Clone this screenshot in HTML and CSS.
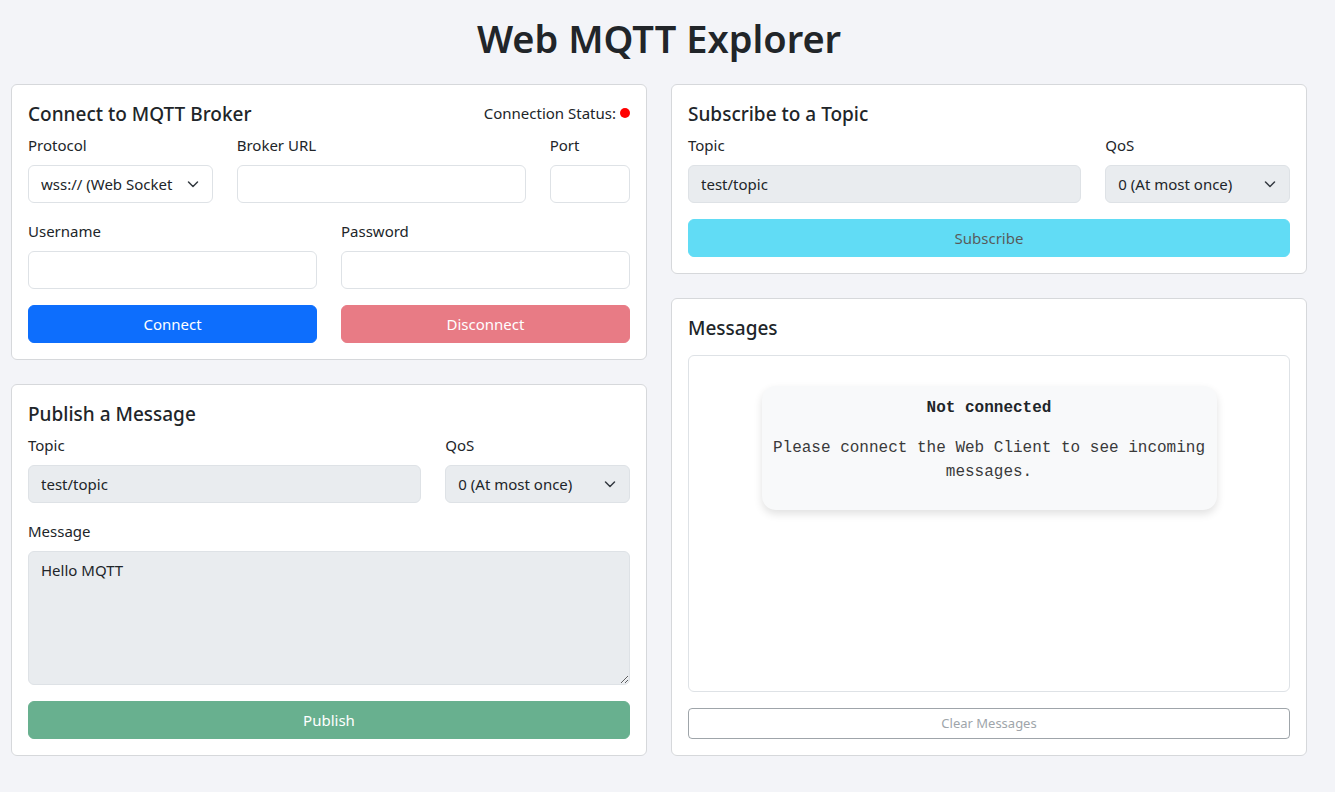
FILE: index.html
```html
<!DOCTYPE html>
<html lang="en">
<head>
<meta charset="utf-8">
<title>Web MQTT Explorer</title>
<link rel="stylesheet" href="styles.css">
</head>
<body>
<div class="page">
  <h1 class="title">Web MQTT Explorer</h1>
  <div class="columns">
    <div class="col">
      <section class="card">
        <div class="card-head">
          <h5 class="card-title">Connect to MQTT Broker</h5>
          <div class="status">Connection Status: <span class="dot"></span></div>
        </div>
        <div class="row row-3">
          <div class="field">
            <label class="label">Protocol</label>
            <div class="select-wrap">
              <select class="control select">
                <option>wss:// (Web Socket Secure)</option>
              </select>
              <svg class="chev" viewBox="0 0 16 16" width="16" height="16"><path d="M3.5 6 8 10.5 12.5 6" fill="none" stroke="#343a40" stroke-width="1.5" stroke-linecap="round" stroke-linejoin="round"/></svg>
            </div>
          </div>
          <div class="field">
            <label class="label">Broker URL</label>
            <input class="control" type="text">
          </div>
          <div class="field">
            <label class="label">Port</label>
            <input class="control" type="text">
          </div>
        </div>
        <div class="row row-2">
          <div class="field">
            <label class="label">Username</label>
            <input class="control" type="text">
          </div>
          <div class="field">
            <label class="label">Password</label>
            <input class="control" type="password">
          </div>
        </div>
        <div class="row row-2 btn-row">
          <button class="btn btn-primary">Connect</button>
          <button class="btn btn-danger disabled">Disconnect</button>
        </div>
      </section>

      <section class="card">
        <h5 class="card-title mb8">Publish a Message</h5>
        <div class="row row-84">
          <div class="field">
            <label class="label">Topic</label>
            <input class="control readonly" type="text" value="test/topic" readonly>
          </div>
          <div class="field">
            <label class="label">QoS</label>
            <div class="select-wrap">
              <select class="control select readonly">
                <option>0 (At most once)</option>
              </select>
              <svg class="chev" viewBox="0 0 16 16" width="16" height="16"><path d="M3.5 6 8 10.5 12.5 6" fill="none" stroke="#343a40" stroke-width="1.5" stroke-linecap="round" stroke-linejoin="round"/></svg>
            </div>
          </div>
        </div>
        <div class="field full">
          <label class="label">Message</label>
          <textarea class="control textarea readonly" rows="5" readonly>Hello MQTT</textarea>
        </div>
        <button class="btn btn-success disabled wide">Publish</button>
      </section>
    </div>

    <div class="col">
      <section class="card">
        <h5 class="card-title mb8">Subscribe to a Topic</h5>
        <div class="row row-84">
          <div class="field">
            <label class="label">Topic</label>
            <input class="control readonly" type="text" value="test/topic" readonly>
          </div>
          <div class="field">
            <label class="label">QoS</label>
            <div class="select-wrap">
              <select class="control select readonly">
                <option>0 (At most once)</option>
              </select>
              <svg class="chev" viewBox="0 0 16 16" width="16" height="16"><path d="M3.5 6 8 10.5 12.5 6" fill="none" stroke="#343a40" stroke-width="1.5" stroke-linecap="round" stroke-linejoin="round"/></svg>
            </div>
          </div>
        </div>
        <button class="btn btn-info disabled wide">Subscribe</button>
      </section>

      <section class="card card-grow">
        <h5 class="card-title mb16">Messages</h5>
        <div class="messages">
          <div class="notice">
            <div class="notice-title">Not connected</div>
            <p class="notice-text">Please connect the Web Client to see incoming messages.</p>
          </div>
        </div>
        <button class="btn btn-outline disabled btn-sm">Clear Messages</button>
      </section>
    </div>
  </div>
</div>
</body>
</html>
```

FILE: styles.css
```css
* { box-sizing: border-box; }

html, body {
  margin: 0;
  padding: 0;
}

body {
  background: #f3f4f8;
  color: #212529;
  font-family: "Noto Sans", "Open Sans", sans-serif;
  font-size: 15px;
  line-height: 24px;
}

.page {
  padding: 14px 28px 0 11px;
}

.title {
  margin: 0 0 22px;
  text-align: center;
  font-size: 38px;
  line-height: 48px;
  font-weight: 600;
  color: #212529;
}

.columns {
  display: grid;
  grid-template-columns: 1fr 1fr;
  column-gap: 24px;
}

.col {
  display: flex;
  flex-direction: column;
  gap: 24px;
}

.card {
  background: #fff;
  border: 1px solid #d6d8db;
  border-radius: 6px;
  padding: 16px;
  display: flex;
  flex-direction: column;
}

.card-grow { flex: 1; }

.card-head {
  display: flex;
  justify-content: space-between;
  align-items: center;
  margin-bottom: 8px;
}

.card-title {
  margin: 0;
  padding-top: 2px;
  font-size: 19px;
  line-height: 22px;
  font-weight: 500;
}

.mb8 { margin-bottom: 8px; }
.mb16 { margin-bottom: 16px; }

.status {
  display: flex;
  align-items: center;
  gap: 4px;
  font-size: 15px;
}

.dot {
  width: 10px;
  height: 10px;
  border-radius: 50%;
  background: #ff0000;
  display: inline-block;
}

.row {
  display: grid;
  column-gap: 24px;
  margin-bottom: 16px;
}

.row-3 {
  grid-template-columns: calc((100% + 24px) * 4 / 12 - 24px) calc((100% + 24px) * 6 / 12 - 24px) 1fr;
}

.row-2 { grid-template-columns: 1fr 1fr; }

.row-84 {
  grid-template-columns: calc((100% + 24px) * 8 / 12 - 24px) 1fr;
}

.btn-row { margin-bottom: 0; }

.field {
  display: flex;
  flex-direction: column;
  min-width: 0;
}

.field.full { margin-bottom: 16px; }

.label {
  margin-bottom: 8px;
  line-height: 24px;
}

.control {
  width: 100%;
  height: 38px;
  padding: 6px 12px;
  font-family: inherit;
  font-size: 15px;
  line-height: 24px;
  color: #212529;
  background: #fff;
  border: 1px solid #dee2e6;
  border-radius: 6px;
  outline: none;
}

.readonly { background: #e9ecef; }

.select-wrap { position: relative; }

.select {
  appearance: none;
  -webkit-appearance: none;
  padding-right: 36px;
}

.chev {
  position: absolute;
  right: 12px;
  top: 11px;
  pointer-events: none;
}

.textarea {
  height: 134px;
  resize: vertical;
}

.btn {
  height: 38px;
  padding: 6px 12px;
  border: 1px solid transparent;
  border-radius: 6px;
  font-family: inherit;
  font-size: 15px;
  line-height: 24px;
  color: #fff;
  text-align: center;
  cursor: pointer;
}

.wide { width: 100%; }

.disabled { opacity: 0.65; }

.btn-primary { background: #0d6efd; border-color: #0d6efd; }
.btn-danger { background: #dc3545; border-color: #dc3545; }
.btn-success { background: #198754; border-color: #198754; }
.btn-info { background: #0dcaf0; border-color: #0dcaf0; color: #000; }

.btn-outline {
  background: transparent;
  border-color: #6c757d;
  color: #6c757d;
}

.btn-sm {
  height: 31px;
  padding: 4px 8px;
  font-size: 13px;
  line-height: 21px;
  border-radius: 4px;
  width: 100%;
}

.messages {
  flex: 1;
  margin-bottom: 16px;
  border: 1px solid #dee2e6;
  border-radius: 6px;
  background: #fff;
  padding-top: 30px;
  display: flex;
  flex-direction: column;
  align-items: center;
}

.notice {
  width: 455px;
  padding: 10px 10px 10px;
  background: #f8f9fa;
  border-radius: 14px;
  box-shadow: 0 4px 8px rgba(0, 0, 0, 0.12);
  text-align: center;
  font-family: "Liberation Mono", "Courier New", monospace;
  font-size: 16px;
  line-height: 24px;
  color: #3a3a3a;
}

.notice-title {
  font-weight: 700;
  color: #212529;
}

.notice-text {
  margin: 16px 0 16px;
}
```
